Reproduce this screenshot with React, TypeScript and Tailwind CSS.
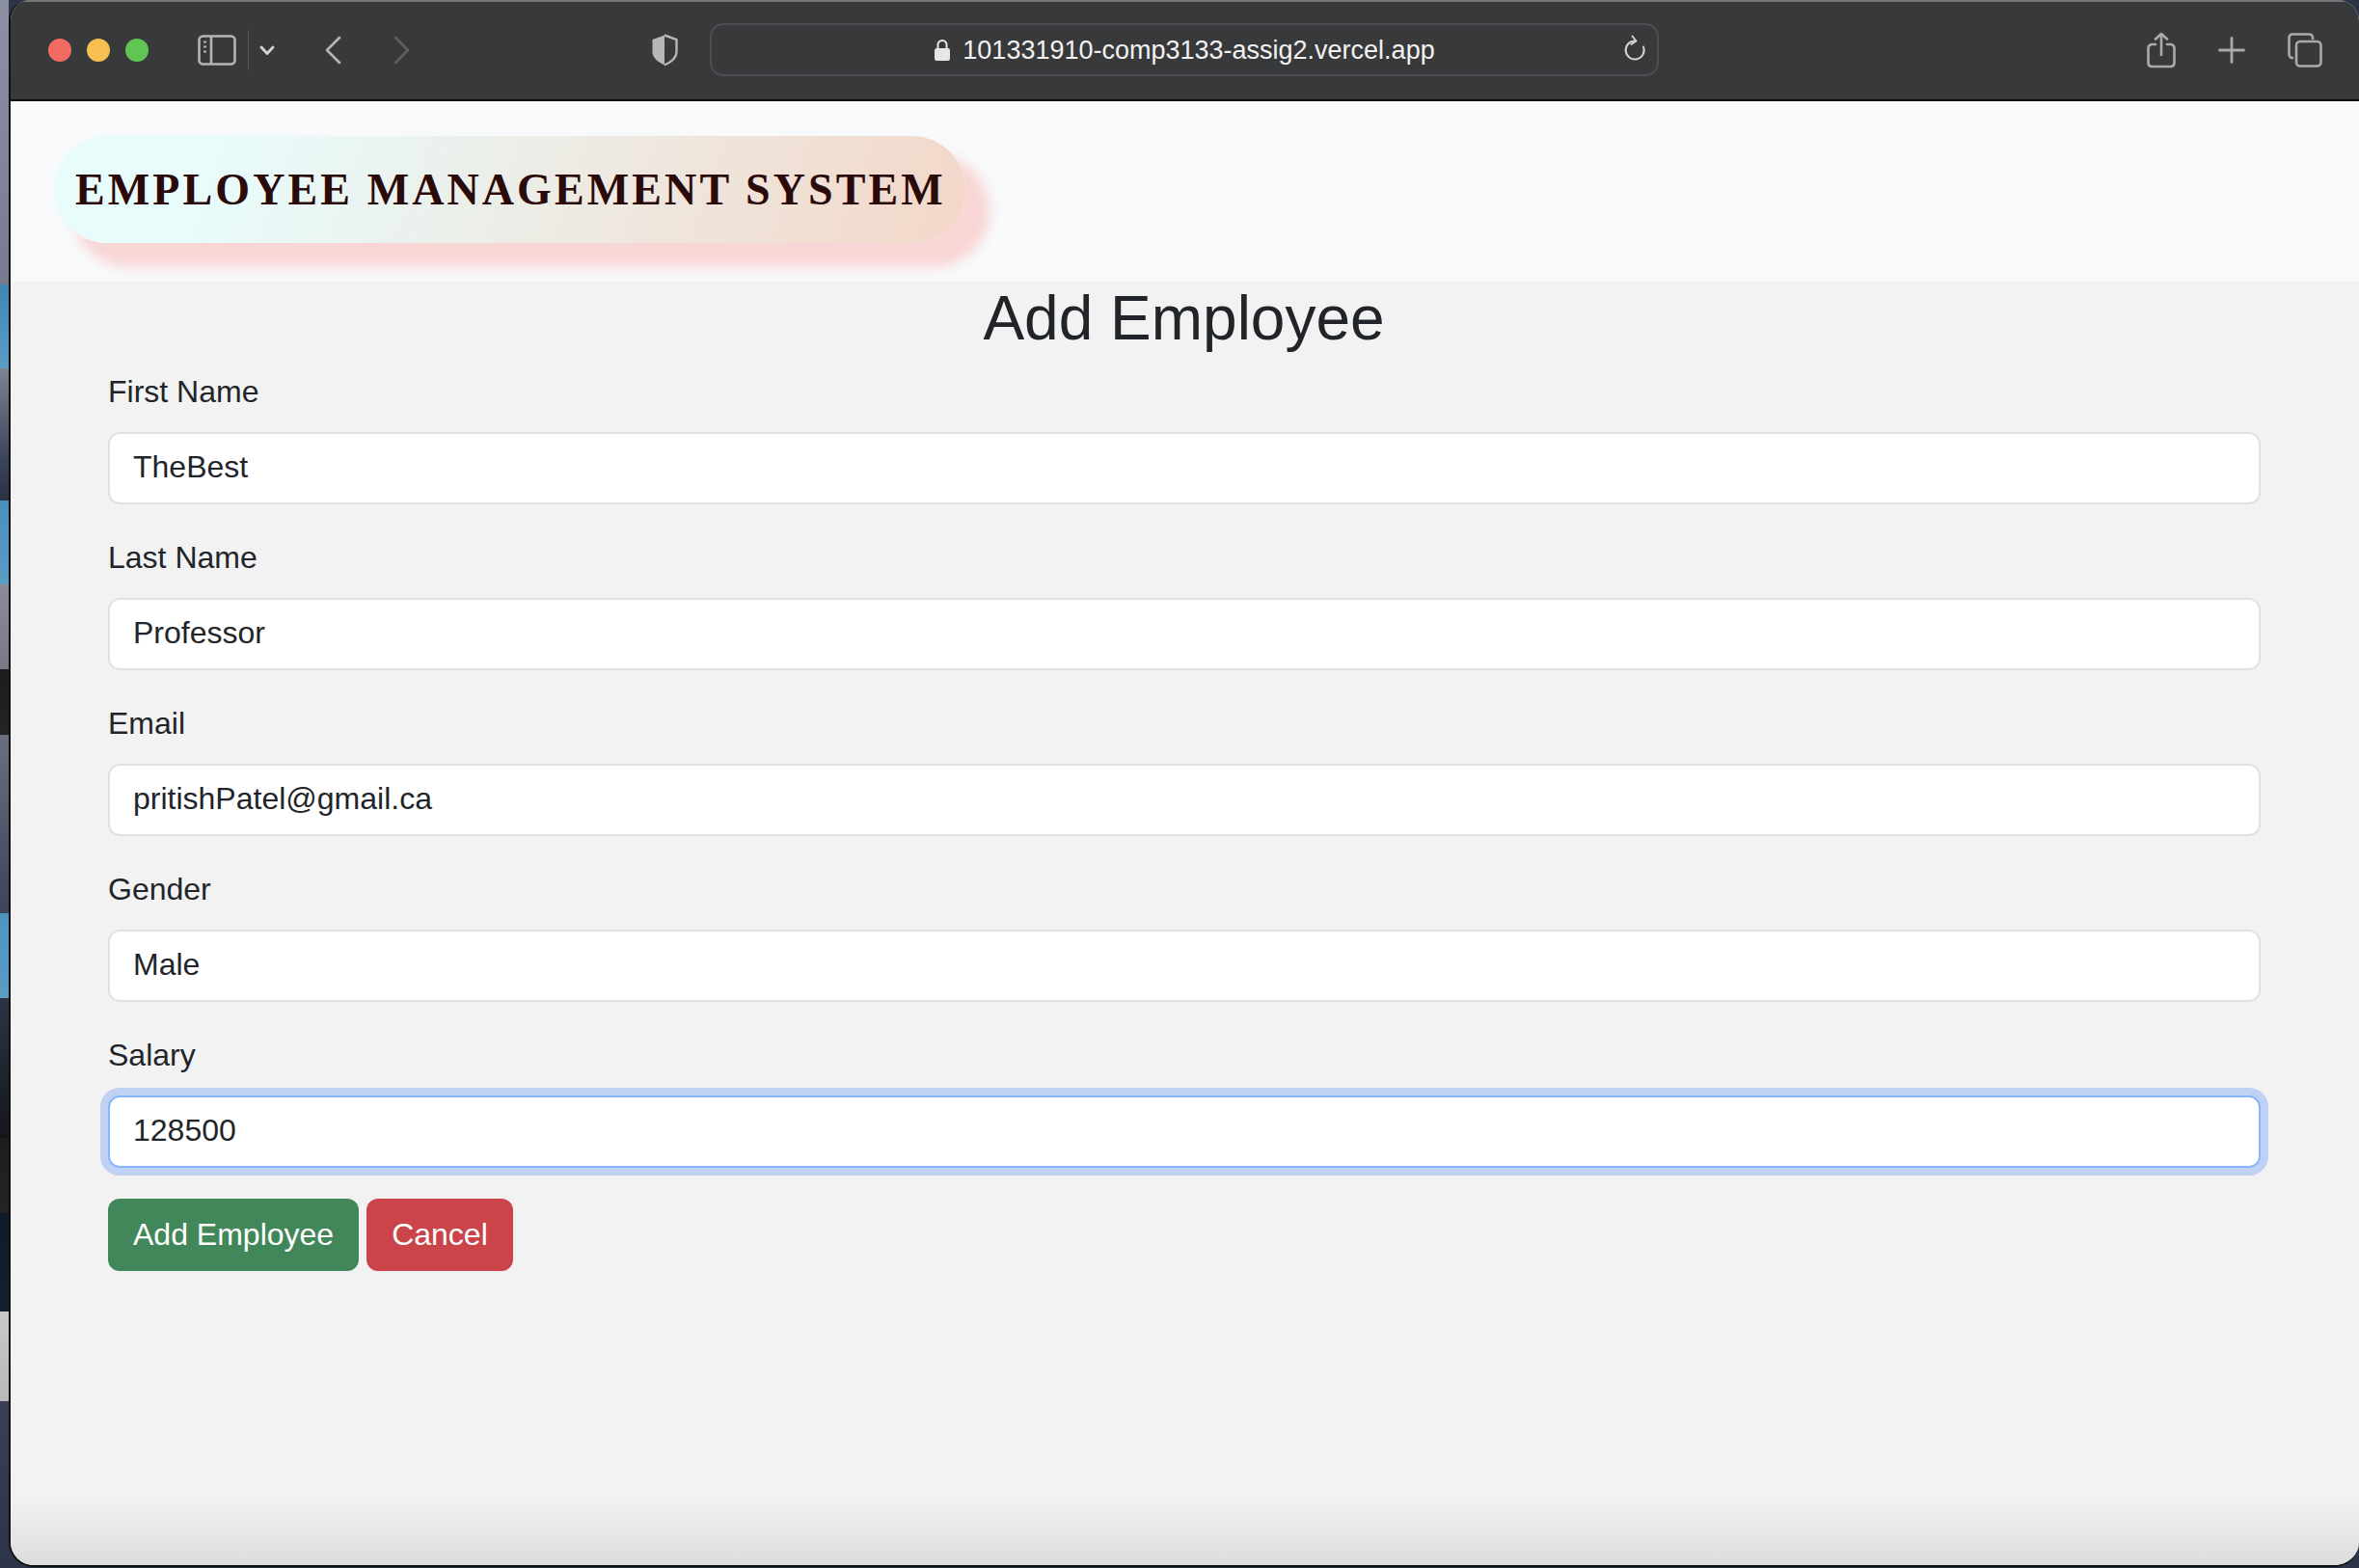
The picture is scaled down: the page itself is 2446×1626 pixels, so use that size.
const strip: [number, string][] = [
  [295, "linear-gradient(180deg,#8d8fa3,#7f8196 70%,#77798c)"],
  [87, "linear-gradient(180deg,#3f86b3,#5a9dc5)"],
  [137, "linear-gradient(180deg,#7f8293,#3a4458 70%,#2a3244)"],
  [87, "linear-gradient(180deg,#4a8fbb,#5a9dc5)"],
  [88, "linear-gradient(180deg,#8a8c9a,#777986)"],
  [68, "linear-gradient(180deg,#1c1c1e,#242426)"],
  [185, "linear-gradient(180deg,#6b6e80,#3c4458)"],
  [88, "linear-gradient(180deg,#4e94c0,#5a9dc5)"],
  [145, "linear-gradient(180deg,#2c3444,#14161c)"],
  [78, "linear-gradient(180deg,#1d1d1f,#242426)"],
  [102, "linear-gradient(180deg,#0d1a28,#14202e)"],
  [93, "linear-gradient(180deg,#c8c8cc,#b8b8bc)"],
  [173, "linear-gradient(180deg,#3a4054,#2d3448)"],
];

function Field({ label, value, focus }: { label: string; value: string; focus?: boolean }) {
  return (
    <div className="mb-[33px]">
      <label className="block mb-[19px] text-[32px] leading-[45px] text-[#212529]">{label}</label>
      <div
        className={
          focus
            ? "h-[75px] pl-[24px] pb-[3px] flex items-center bg-white rounded-[12px] border-2 border-[#86b7fe] shadow-[0_0_0_8px_#c0d1f3] text-[32px] text-[#212529]"
            : "h-[75px] pl-[24px] pb-[3px] flex items-center bg-white rounded-[12px] border-2 border-[#dee2e6] text-[32px] text-[#212529]"
        }
      >
        {value}
      </div>
    </div>
  );
}

export default function App() {
  return (
    <div className="w-[2446px] h-[1626px] flex bg-[#2d3448] overflow-hidden font-['Liberation_Sans',Arial,sans-serif]">
      <div className="w-[9px] flex flex-col shrink-0">
        {strip.map(([h, bg], i) => (
          <div key={i} style={{ height: h, background: bg }} />
        ))}
      </div>
      <div className="flex-1 flex flex-col h-[1625px] rounded-t-[22px] rounded-b-[26px] overflow-hidden border-l-2 border-b-2 border-[#111] bg-[#f2f2f2]">
        {/* Safari toolbar */}
        <div className="h-[105px] shrink-0 relative flex items-center pb-[2px] bg-[#38393b] border-t-2 border-t-[#77787a] border-b-2 border-b-[#0c0c0c]">
          <div className="flex items-center gap-[16px] ml-[39px]">
            <span className="w-[24px] h-[24px] rounded-full bg-[#f26b60]" />
            <span className="w-[24px] h-[24px] rounded-full bg-[#f6bf50]" />
            <span className="w-[24px] h-[24px] rounded-full bg-[#61c553]" />
          </div>
          <svg className="ml-[51px]" width="40" height="32" viewBox="0 0 40 32" fill="none" stroke="#b4b5b6" strokeWidth="2.6">
            <rect x="1.5" y="1.5" width="37" height="29" rx="4" />
            <path d="M14 1.5v29" />
            <path d="M6 7.5h3M6 12.5h3M6 17.5h3" strokeWidth="2" />
          </svg>
          <div className="ml-[12px] w-[1px] h-[42px] bg-[#56575a]" />
          <svg className="ml-[11px]" width="16" height="12" viewBox="0 0 16 12" fill="none" stroke="#d4d4d5" strokeWidth="2.8" strokeLinecap="round" strokeLinejoin="round">
            <path d="M2 3l6 6.5L14 3" />
          </svg>
          <svg className="ml-[51px]" width="18" height="30" viewBox="0 0 18 30" fill="none" stroke="#b4b5b6" strokeWidth="2.6" strokeLinecap="round" strokeLinejoin="round">
            <path d="M16 2L3 15l13 13" />
          </svg>
          <svg className="ml-[54px]" width="18" height="30" viewBox="0 0 18 30" fill="none" stroke="#5f6062" strokeWidth="2.6" strokeLinecap="round" strokeLinejoin="round">
            <path d="M2 2l13 13L2 28" />
          </svg>
          <svg className="ml-[248px]" width="30" height="34" viewBox="0 0 30 34">
            <path d="M15 1.5L2.5 6v13c0 6 6 10.5 12.5 13.5z" fill="#b6b7b8" />
            <path d="M15 1.5L27.5 6v13c0 6-6 10.5-12.5 13.5" fill="none" stroke="#b6b7b8" strokeWidth="2.4" />
          </svg>
          <div className="ml-[32px] w-[984px] h-[55px] relative flex items-center justify-center rounded-[14px] border-2 border-[#4d4e51] text-[#f2f2f2]">
            <svg className="mr-[12px]" width="18" height="24" viewBox="0 0 18 24">
              <path d="M4.5 11V6.500a4.500 4.500 0 0 1 9 0V11" fill="none" stroke="#e6e6e6" strokeWidth="2" />
              <rect x="1" y="10" width="16" height="13" rx="2.200" fill="#e6e6e6" />
            </svg>
            <span className="text-[27px] leading-none pt-[1px]">101331910-comp3133-assig2.vercel.app</span>
            <svg className="absolute right-[10px] top-[10px]" width="26" height="30" viewBox="0 0 26 30" fill="none" stroke="#d2d2d3" strokeWidth="2" strokeLinecap="round" strokeLinejoin="round">
              <path d="M13.500 6.500a9.500 9.500 0 1 0 8.500 6" />
              <path d="M10.500 1.500l4 5-5 3.500" />
            </svg>
          </div>
          <svg className="ml-[505px]" width="32" height="38" viewBox="0 0 32 38" fill="none" stroke="#a9aaab" strokeWidth="2.6" strokeLinecap="round" strokeLinejoin="round">
            <path d="M10 13H6a4 4 0 0 0-3.500 3.500V32a4 4 0 0 0 3.500 4h20a4 4 0 0 0 3.500-4V16.500A4 4 0 0 0 26 13h-4" />
            <path d="M16 24V2M10 7.500L16 2l6 5.500" />
          </svg>
          <svg className="ml-[43px]" width="28" height="28" viewBox="0 0 28 28" fill="none" stroke="#a9aaab" strokeWidth="2.8" strokeLinecap="round">
            <path d="M14 1.500v25M1.500 14h25" />
          </svg>
          <svg className="ml-[44px]" width="36" height="36" viewBox="0 0 36 36" fill="none" stroke="#a9aaab" strokeWidth="2.6" strokeLinejoin="round">
            <path d="M6 26H5a3.500 3.500 0 0 1-3.500-3.500V5A3.500 3.500 0 0 1 5 1.500h17.500A3.500 3.500 0 0 1 26 5v2" />
            <rect x="9" y="9" width="25.500" height="25.500" rx="4" />
          </svg>
        </div>

        {/* App navbar */}
        <div className="h-[187px] shrink-0 bg-[#f8f9fa] pl-[45px] pt-[36px]">
          <div className="w-[945px] h-[111px] flex items-center pl-[22px] rounded-[56px] bg-[linear-gradient(110deg,#e8fcfc_18%,#f3d7c8_100%)] shadow-[22px_22px_12px_3px_#f9d6d6]">
            <span className="font-['Liberation_Serif',serif] font-bold text-[#2b0a0a] text-[46px] leading-none tracking-[3.1px] whitespace-nowrap">
              EMPLOYEE MANAGEMENT SYSTEM
            </span>
          </div>
        </div>

        {/* Form */}
        <div className="flex-1 flex flex-col">
          <h2 className="text-center text-[64px] leading-[75px] text-[#212529] mt-[1px] mb-[16px] pr-[2px]">Add Employee</h2>
          <div className="pl-[101px] pr-[102px]">
            <Field label="First Name" value="TheBest" />
            <Field label="Last Name" value="Professor" />
            <Field label="Email" value="pritishPatel@gmail.ca" />
            <Field label="Gender" value="Male" />
            <Field label="Salary" value="128500" focus />
            <div className="flex gap-[8px] mt-[-1px]">
              <button className="h-[75px] px-[26px] pb-[2px] rounded-[12px] bg-[#42875a] text-white text-[32px]">Add Employee</button>
              <button className="h-[75px] px-[26px] pb-[2px] rounded-[12px] bg-[#cb444a] text-white text-[32px]">Cancel</button>
            </div>
          </div>
          <div className="mt-auto h-[70px] bg-[linear-gradient(180deg,#f2f2f2,#dcdcdc)]" />
        </div>
      </div>
    </div>
  );
}
